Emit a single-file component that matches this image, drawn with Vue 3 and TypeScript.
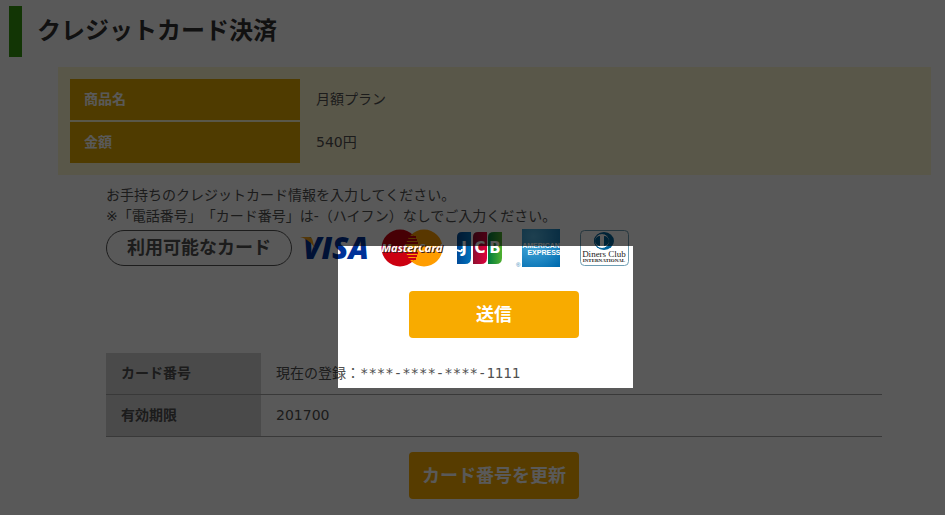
<script setup lang="ts">
interface Row {
  label: string
  value: string
  code?: string
}

const product: Row[] = [
  { label: '商品名', value: '月額プラン' },
  { label: '金額', value: '540円' },
]

const card: Row[] = [
  { label: 'カード番号', value: '現在の登録：', code: '****-****-****-1111' },
  { label: '有効期限', value: '201700' },
]
</script>

<template>
  <main class="page">
    <h1 class="title">クレジットカード決済</h1>

    <section class="product">
      <table class="product-table">
        <tbody>
          <tr v-for="row in product" :key="row.label">
            <th scope="row">{{ row.label }}</th>
            <td>{{ row.value }}</td>
          </tr>
        </tbody>
      </table>
    </section>

    <form class="payment" @submit.prevent>
      <p class="note">
        お手持ちのクレジットカード情報を入力してください。<br />
        ※「電話番号」「カード番号」は-（ハイフン）なしでご入力ください。
      </p>

      <div class="brands">
        <span class="badge">利用可能なカード</span>

        <svg width="72" height="38" viewBox="0 0 72 38" role="img" aria-label="VISA">
          <text class="visa" x="3" y="30">VISA</text>
          <path d="M0 8h9c2 0 3 1 3.500 3l2 8C12 14 7 10 0 8z" fill="#f0a11c" />
        </svg>

        <svg width="65" height="38" viewBox="0 0 65 38" role="img" aria-label="MasterCard">
          <circle cx="44" cy="19" r="18.500" fill="#ff9d00" />
          <circle cx="20" cy="19" r="18.500" fill="#cc0010" />
          <path d="M32 5a18.500 18.500 0 0 1 0 28a18.500 18.500 0 0 1 0-28z" fill="#ff9d00" />
          <path
            d="M29 8h7M27 11h10M26 14h12M26 24h12M27 27h10M28 30h8"
            stroke="#cc0010"
            stroke-width="2"
          />
          <text class="master shade" x="33" y="24">MasterCard</text>
          <text class="master" x="32" y="23">MasterCard</text>
        </svg>

        <svg width="52" height="38" viewBox="0 0 52 38" role="img" aria-label="JCB">
          <defs>
            <linearGradient id="jcb-blue">
              <stop offset="0" stop-color="#004a98" />
              <stop offset="1" stop-color="#0072bc" />
            </linearGradient>
            <linearGradient id="jcb-red">
              <stop offset="0" stop-color="#8c1030" />
              <stop offset="1" stop-color="#e0003c" />
            </linearGradient>
            <linearGradient id="jcb-green">
              <stop offset="0" stop-color="#007a3c" />
              <stop offset="1" stop-color="#50b030" />
            </linearGradient>
          </defs>
          <path d="M9 3h9v26q0 6-6 6H4V8q0-5 5-5z" fill="url(#jcb-blue)" />
          <path d="M25 3h9v26q0 6-6 6h-8V8q0-5 5-5z" fill="url(#jcb-red)" />
          <path d="M41 3h8v26q0 6-6 6h-8V8q0-5 6-5z" fill="url(#jcb-green)" />
          <path d="M4 21q5 3 5-1" fill="none" stroke="#fff" stroke-width="2" />
          <g class="jcb">
            <text x="11" y="24">J</text>
            <text x="27" y="24">C</text>
            <text x="42" y="24">B</text>
          </g>
        </svg>

        <svg width="50" height="38" viewBox="0 0 50 38" role="img" aria-label="AMERICAN EXPRESS">
          <defs>
            <radialGradient id="amex" cx="0.300" cy="0.200" r="1">
              <stop offset="0" stop-color="#58b8e4" />
              <stop offset="1" stop-color="#006cb0" />
            </radialGradient>
          </defs>
          <rect x="9" width="38" height="38" fill="url(#amex)" />
          <g class="amex">
            <text x="28" y="19">AMERICAN</text>
            <text x="31" y="26">EXPRESS</text>
          </g>
          <text class="mark" x="3" y="38">®</text>
        </svg>

        <svg width="60" height="38" viewBox="0 0 60 38" role="img" aria-label="Diners Club INTERNATIONAL">
          <rect x="9.500" y="1.500" width="48" height="35" rx="4" fill="#fff" stroke="#6e9eb4" />
          <ellipse cx="33" cy="12" rx="10" ry="9" fill="#00649c" />
          <circle cx="31" cy="12" r="7.500" fill="#fff" />
          <circle cx="31" cy="12" r="7.500" fill="none" stroke="#00649c" />
          <path d="M29 7v10a5 5 0 0 1 0-10zM33 7v10a5 5 0 0 0 0-10z" fill="#00649c" />
          <text class="diners" x="33" y="28">Diners Club</text>
          <text class="inter" x="33" y="33">INTERNATIONAL</text>
        </svg>
      </div>

      <button class="button" type="submit">送信</button>

      <table class="card-table">
        <tbody>
          <tr v-for="row in card" :key="row.label">
            <th scope="row">{{ row.label }}</th>
            <td>{{ row.value }}<span v-if="row.code" class="code">{{ row.code }}</span></td>
          </tr>
        </tbody>
      </table>

      <button class="button" type="button">カード番号を更新</button>
    </form>

    <div class="spotlight" aria-hidden="true"></div>
  </main>
</template>

<style>
body {
  margin: 0;
}
</style>

<style scoped>
.page {
  position: relative;
  box-sizing: border-box;
  min-height: 100vh;
  padding: 6px 14px 16px 9px;
  overflow: hidden;
  background: #fff;
  color: #505050;
  font-family: 'DejaVu Sans', 'Noto Sans CJK JP', sans-serif;
  font-size: 14px;
  line-height: 21px;
  text-spacing-trim: space-all;
}

.title {
  margin: 0 0 10px;
  padding: 0 0 6px 15px;
  border-left: 13px solid #349810;
  color: #333;
  font-family: 'Noto Sans CJK JP', sans-serif;
  font-size: 24px;
  line-height: 45px;
}

.product {
  margin-left: 49px;
  padding: 10px;
  background: #fff8d2;
}

.product-table {
  width: 100%;
  border-spacing: 2px;
}

.product-table th,
.product-table td {
  height: 41px;
  padding: 0 14px;
  text-align: left;
}

.product-table th {
  box-sizing: border-box;
  width: 230px;
  background: #e2aa00;
  color: #fff;
}

.payment {
  margin: 10px 49px 0 97px;
}

.note {
  margin: 0 0 2px;
}

.brands {
  display: flex;
  align-items: center;
  gap: 8px;
  margin-bottom: 24px;
}

.brands svg {
  flex: none;
}

.badge {
  box-sizing: border-box;
  flex: none;
  width: 186px;
  border: 1px solid #555;
  border-radius: 18px;
  font-size: 18px;
  font-weight: 700;
  line-height: 34px;
  text-align: center;
}

.button {
  display: block;
  width: 170px;
  height: 47px;
  margin: 0 auto;
  padding: 0 0 4px;
  border: 0;
  border-radius: 4px;
  background: #f8ab00;
  color: #fff;
  font-family: 'Noto Sans CJK JP', sans-serif;
  font-size: 18px;
  font-weight: 700;
}

.card-table {
  width: 100%;
  margin: 15px 0;
  border-collapse: separate;
  border-spacing: 0;
}

.card-table th,
.card-table td {
  box-sizing: border-box;
  height: 42px;
  padding: 0 15px;
  border-bottom: 1px solid #a4a4a4;
  text-align: left;
}

.card-table th {
  width: 155px;
  background: #d4d4d4;
}

.code {
  font-family: 'DejaVu Sans Mono', monospace;
}

.visa {
  fill: #003298;
  font: italic 800 30px 'Open Sans', sans-serif;
}

.master {
  fill: #fff;
  font: italic 700 11px 'Open Sans', sans-serif;
  text-anchor: middle;
}

.shade {
  fill: #402020;
}

.jcb {
  fill: #fff;
  font: 700 15px 'DejaVu Sans', sans-serif;
  text-anchor: middle;
}

.amex {
  fill: #fff;
  font: 700 7px 'Liberation Sans', sans-serif;
  text-anchor: middle;
}

.mark {
  fill: #2c84b8;
  font: 6px 'Liberation Sans', sans-serif;
}

.diners {
  fill: #222;
  font: 9px 'Liberation Serif', serif;
  text-anchor: middle;
}

.inter {
  fill: #222;
  font: 700 5px 'Liberation Serif', serif;
  text-anchor: middle;
}

/* Everything outside the highlighted area is dimmed by the shadow. */
.spotlight {
  position: absolute;
  top: 246px;
  left: 338px;
  width: 295px;
  height: 142px;
  box-shadow: 0 0 0 3000px rgba(0, 0, 0, 0.65);
  pointer-events: none;
}
</style>
